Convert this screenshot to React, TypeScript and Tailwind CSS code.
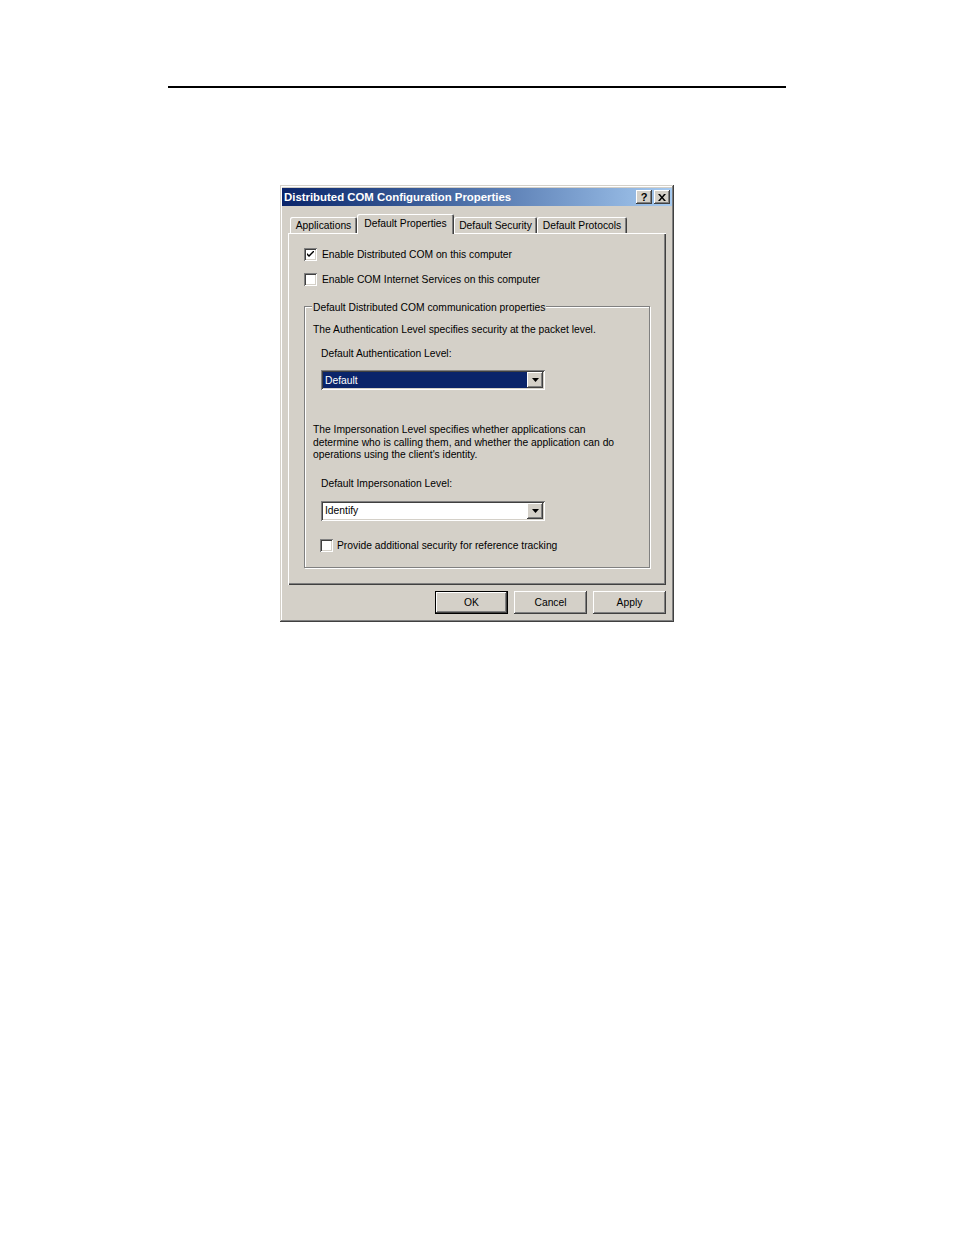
import React from 'react';

const raised =
  'shadow-[inset_-1px_-1px_0_#404040,inset_1px_1px_0_#ffffff,inset_-2px_-2px_0_#808080,inset_2px_2px_0_#d4d0c8]';
const sunken =
  'shadow-[inset_1px_1px_0_#808080,inset_-1px_-1px_0_#ffffff,inset_2px_2px_0_#404040,inset_-2px_-2px_0_#d4d0c8]';

function Checkbox({ checked }: { checked?: boolean }) {
  return (
    <div className={`w-[13px] h-[13px] bg-white flex items-center justify-center shrink-0 ${sunken}`}>
      {checked && (
        <svg width="7" height="7" viewBox="0 0 7 7">
          <path d="M0 2 L0 4 L2 6 L7 1 L7 -1 L2 4 Z" fill="#000" />
        </svg>
      )}
    </div>
  );
}

function Arrow() {
  return (
    <div className={`w-[16px] h-[16px] bg-[#d4d0c8] flex items-center justify-center shrink-0 ${raised}`}>
      <svg width="7" height="4" viewBox="0 0 7 4">
        <path d="M0 0 H7 L3.5 4 Z" fill="#000" />
      </svg>
    </div>
  );
}

function Tab({ label, w, active }: { label: string; w: string; active?: boolean }) {
  return (
    <div
      className={`${w} ${
        active
          ? 'h-[20px] mb-[-1px] relative z-10 pb-[2px]'
          : 'h-[16px] pt-[1px]'
      } bg-[#d4d0c8] rounded-t-[2px] flex items-center justify-center shadow-[inset_1px_1px_0_#ffffff,inset_-1px_0_0_#404040,inset_-2px_0_0_#808080]`}
    >
      <span className="whitespace-nowrap">{label}</span>
    </div>
  );
}

function Button({ label, def }: { label: string; def?: boolean }) {
  return (
    <div
      className={`w-[73px] h-[23px] bg-[#d4d0c8] flex items-center justify-center ${
        def
          ? 'border border-black shadow-[inset_-1px_-1px_0_#404040,inset_1px_1px_0_#ffffff,inset_-2px_-2px_0_#808080]'
          : raised
      }`}
    >
      {label}
    </div>
  );
}

export default function App() {
  return (
    <div
      className="w-[954px] h-[1235px] bg-white pt-[86px] text-black text-[10.3px] leading-[13px]"
      style={{ fontFamily: '"Liberation Sans", Arial, sans-serif' }}
    >
      <div className="ml-[168px] w-[618px] h-[2px] bg-black" />

      <div
        className="mt-[97px] ml-[280px] w-[394px] h-[437px] bg-[#d4d0c8] pt-[3px] px-[2px] shadow-[inset_-1px_-1px_0_#404040,inset_1px_1px_0_#d4d0c8,inset_-2px_-2px_0_#808080,inset_2px_2px_0_#ffffff]"
      >
        {/* Title bar */}
        <div className="h-[18px] bg-gradient-to-r from-[#0a246a] to-[#a6caf0] flex items-center pl-[2px] pr-[2px]">
          <span className="text-white font-bold text-[11.4px] whitespace-nowrap flex-1">
            Distributed COM Configuration Properties
          </span>
          <div className={`w-[16px] h-[14px] bg-[#d4d0c8] flex items-center justify-center font-bold text-[11px] ${raised}`}>
            ?
          </div>
          <div className={`ml-[2px] w-[16px] h-[14px] bg-[#d4d0c8] flex items-center justify-center ${raised}`}>
            <svg width="8" height="7" viewBox="0 0 8 7">
              <path d="M0 0 L2 0 L4 2.5 L6 0 L8 0 L5 3.5 L8 7 L6 7 L4 4.5 L2 7 L0 7 L3 3.5 Z" fill="#000" />
            </svg>
          </div>
        </div>

        {/* Tabs */}
        <div className="mt-[8px] h-[19px] pl-[8px] flex items-end">
          <Tab label="Applications" w="w-[67px]" />
          <Tab label="Default Properties" w="w-[97px]" active />
          <Tab label="Default Security" w="w-[83px]" />
          <Tab label="Default Protocols" w="w-[90px]" />
        </div>

        {/* Panel */}
        <div className="ml-[6px] w-[378px] h-[352px] bg-[#d4d0c8] pl-[16px] pt-[15px] shadow-[inset_1px_1px_0_#ffffff,inset_-1px_-1px_0_#404040,inset_-2px_-2px_0_#808080]">
          <div className="flex items-center h-[13px]">
            <Checkbox checked />
            <span className="ml-[5px] whitespace-nowrap">Enable Distributed COM on this computer</span>
          </div>
          <div className="mt-[12px] flex items-center h-[13px]">
            <Checkbox />
            <span className="ml-[5px] whitespace-nowrap">Enable COM Internet Services on this computer</span>
          </div>

          {/* Group box */}
          <div className="mt-[20px] w-[346px] h-[262px] relative border border-[#808080] shadow-[inset_1px_1px_0_#ffffff,1px_1px_0_#ffffff] pl-[8px]">
            <span className="absolute left-[7px] top-[-6px] px-[1px] bg-[#d4d0c8] whitespace-nowrap">
              Default Distributed COM communication properties
            </span>
            <p className="mt-[16px] whitespace-nowrap">
              The Authentication Level specifies security at the packet level.
            </p>
            <p className="mt-[11px] ml-[8px]">Default Authentication Level:</p>
            <div className={`mt-[10px] ml-[8px] w-[224px] h-[20px] bg-white p-[2px] flex ${sunken}`}>
              <div className="flex-1 bg-[#0a246a] text-white flex items-center pl-[2px]">Default</div>
              <Arrow />
            </div>
            <p className="mt-[34px] leading-[12.5px]">
              The Impersonation Level specifies whether applications can
              <br />
              determine who is calling them, and whether the application can do
              <br />
              operations using the client's identity.
            </p>
            <p className="mt-[15px] ml-[8px]">Default Impersonation Level:</p>
            <div className={`mt-[11px] ml-[8px] w-[224px] h-[20px] bg-white p-[2px] flex ${sunken}`}>
              <div className="flex-1 flex items-center pl-[2px]">Identify</div>
              <Arrow />
            </div>
            <div className="mt-[18px] ml-[7px] flex items-center h-[13px]">
              <Checkbox />
              <span className="ml-[4px] whitespace-nowrap">Provide additional security for reference tracking</span>
            </div>
          </div>
        </div>

        {/* Buttons */}
        <div className="ml-[6px] w-[378px] mt-[6px] flex justify-end gap-[6px]">
          <Button label="OK" def />
          <Button label="Cancel" />
          <Button label="Apply" />
        </div>
      </div>
    </div>
  );
}
